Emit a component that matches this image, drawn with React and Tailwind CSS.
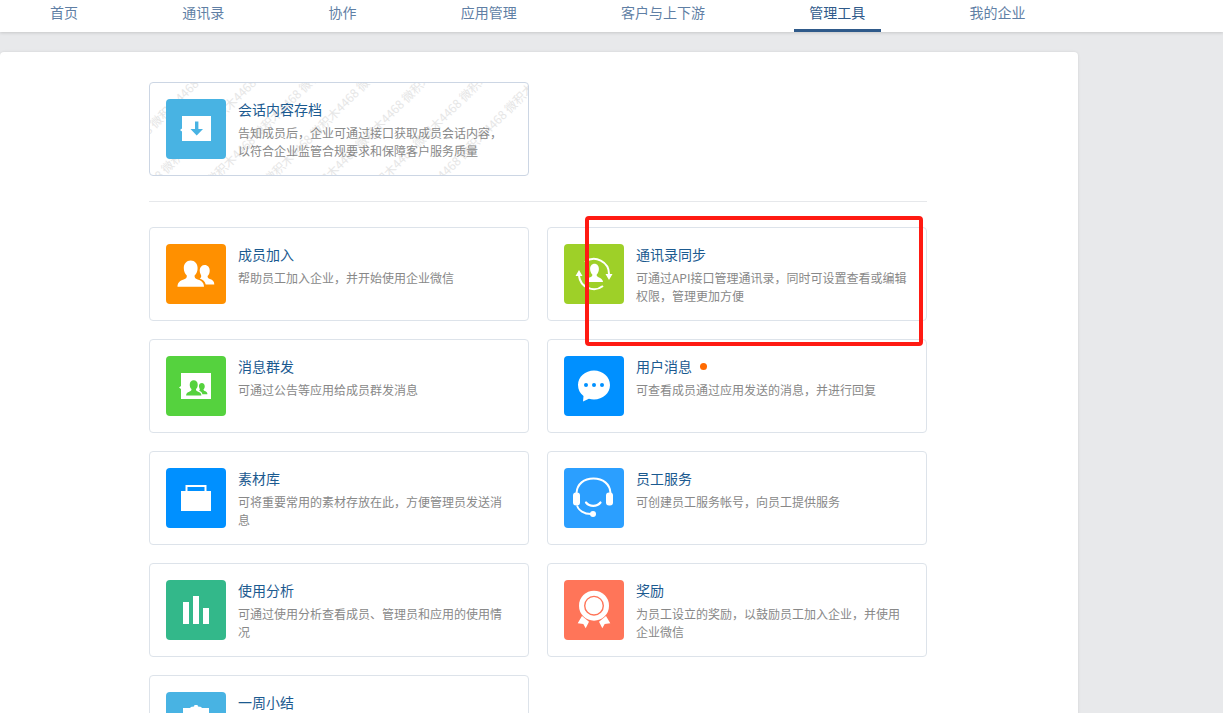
import React from 'react';

const navItems = ['首页', '通讯录', '协作', '应用管理', '客户与上下游', '管理工具', '我的企业'];

const Persons = ({ big, small }) => (
  <>
    <path fill={big} d="M11.500 42.800c0-4 2.200-6 6.200-7.300 2.600-.9 3.300-2 3.100-4-2-1.600-3-4.500-3-7.500 0-4.300 2.800-7.500 6.900-7.500s6.900 3.200 6.900 7.500c0 3-1 5.900-3 7.500-.2 2 .5 3.100 3.100 4 4 1.300 6.300 3.300 6.300 7.300z" />
    <path fill={small} d="M34.500 29.900c1.200 2 1 3.400-.8 4.700 3.200 1.100 5.500 3 6 5.900h8.600c0-2.900-1.500-4.500-4.400-5.500-1.900-.7-2.400-1.500-2.300-3 1.400-1.200 2.100-3.200 2.100-5.300 0-3.300-2-5.600-5-5.600-2.800 0-4.800 2.100-5 5 .1 1.300.1 2.600.800 3.800z" />
  </>
);

const icons = {
  archive: (
    <>
      <path fill="#fff" d="M16 17h29v25H16v-9.500L14 31l2-1.500z" />
      <path fill="#48b3e3" d="M29 22.500h3.400V30H37l-6.300 6.500L24.500 30H29z" />
    </>
  ),
  members: <Persons big="#fff" small="#fff" />,
  sync: (
    <>
      <path fill="none" stroke="#fff" strokeWidth="2" d="M21 18A15 15 0 0 1 45 30M39 42A15 15 0 0 1 15 32" />
      <path fill="#fff" d="M45 36l-3.500-6h7zM15 26l3.500 6h-7z" />
      <path fill="#fff" d="M22 38c0-3 2-4 4.800-5.100 1.200-.5 1.700-1.200 1.500-2.400-1.400-1.200-2.200-3.300-2.200-5.500 0-3.100 1.800-5.200 4.400-5.200s4.400 2.100 4.400 5.200c0 2.200-.8 4.300-2.200 5.500-.2 1.200.3 1.900 1.500 2.400C36 34 39 35 39 38z" />
    </>
  ),
  broadcast: (
    <>
      <path fill="#fff" d="M15 17h30v26H15v-10l-2-1.500 2-1.500z" />
      <g transform="translate(13.400 14.800) scale(.58)">
        <Persons big="#55d23e" small="#55d23e" />
      </g>
    </>
  ),
  message: (
    <>
      <path fill="#fff" d="M30 14.500c8.800 0 16 6.400 16 14.500s-7.200 14.500-16 14.500c-1.800 0-3.500-.3-5.100-.8L19 45.500l.5-5.500C16 37.300 14 33.400 14 29c0-8.100 7.200-14.500 16-14.500z" />
      <circle cx="22" cy="29" r="2" fill="#0090ff" />
      <circle cx="30" cy="29" r="2" fill="#0090ff" />
      <circle cx="38" cy="29" r="2" fill="#0090ff" />
    </>
  ),
  briefcase: (
    <>
      <rect x="15" y="23" width="30" height="20" fill="#fff" />
      <path fill="none" stroke="#fff" strokeWidth="2" d="M20.500 23v-5h19v5" />
    </>
  ),
  headset: (
    <>
      <path fill="none" stroke="#fff" strokeWidth="2" d="M12.500 25C13 16 20 10.500 29.500 10.500S46 16 46.500 25" />
      <rect x="9" y="24.500" width="7" height="13" rx="3" fill="#fff" />
      <rect x="42" y="24.500" width="7" height="13" rx="3" fill="#fff" />
      <path fill="none" stroke="#fff" strokeWidth="2.200" strokeLinecap="round" d="M22 34.500c3.500 4.500 11 4.500 14.500 0" />
      <path fill="none" stroke="#fff" strokeWidth="1.800" d="M13 37.500c1.500 5 7 8.500 14 8.500" />
      <circle cx="29" cy="46" r="3" fill="#fff" />
    </>
  ),
  chart: (
    <>
      <rect x="17" y="22" width="6" height="22" fill="#fff" />
      <rect x="27" y="16" width="6" height="28" fill="#fff" />
      <rect x="37" y="28" width="6" height="16" fill="#fff" />
    </>
  ),
  award: (
    <>
      <path fill="#fff" d="M13.700 43.300 18 36l7 5.700-3.300 6.600-2.400-4.300zM46.300 43.300 42 36l-7 5.700 3.300 6.600 2.400-4.300z" />
      <circle cx="30" cy="25.700" r="15" fill="#fff" />
      <circle cx="30" cy="25.700" r="9.300" fill="none" stroke="#ff7559" strokeWidth="1.400" />
    </>
  ),
  clipboard: <path fill="#fff" d="M17 16h7.500v-1l3.500-.5.500-1.500h3l.500 1.500 3.500.5v1H43v30H17z" />,
};

const tools = [
  { title: '成员加入', desc: '帮助员工加入企业，并开始使用企业微信', color: 'bg-[#ff9000]', icon: 'members' },
  { title: '通讯录同步', desc: '可通过API接口管理通讯录，同时可设置查看或编辑权限，管理更加方便', color: 'bg-[#9ed028]', icon: 'sync' },
  { title: '消息群发', desc: '可通过公告等应用给成员群发消息', color: 'bg-[#55d23e]', icon: 'broadcast' },
  { title: '用户消息', desc: '可查看成员通过应用发送的消息，并进行回复', color: 'bg-[#0090ff]', icon: 'message', dot: true },
  { title: '素材库', desc: '可将重要常用的素材存放在此，方便管理员发送消息', color: 'bg-[#0090ff]', icon: 'briefcase' },
  { title: '员工服务', desc: '可创建员工服务帐号，向员工提供服务', color: 'bg-[#2b9fff]', icon: 'headset' },
  { title: '使用分析', desc: '可通过使用分析查看成员、管理员和应用的使用情况', color: 'bg-[#33b88a]', icon: 'chart' },
  { title: '奖励', desc: '为员工设立的奖励，以鼓励员工加入企业，并使用企业微信', color: 'bg-[#ff7559]', icon: 'award' },
  { title: '一周小结', desc: '', color: 'bg-[#48b3e3]', icon: 'clipboard' },
];

// one wrapped block, rotated over the whole card
const watermarkText = Array.from({ length: 70 }, () => '微积木4468').join(' ');

const ToolCard = ({ title, desc, color, icon, dot, bordered, watermark }) => (
  <div className={`relative flex h-[94px] w-[380px] overflow-hidden rounded-[4px] border bg-white pl-4 pt-4 ${bordered || 'border-[#dde3ea]'}`}>
    {watermark && (
      <div className="absolute left-[-60px] top-[-190px] h-[470px] w-[500px] rotate-[-45deg] overflow-hidden text-xs leading-[40px] text-[#e6e6e6]">
        {watermarkText}
      </div>
    )}
    <div className={`relative h-[60px] w-[60px] shrink-0 rounded-[4px] ${color}`}>
      <svg viewBox="0 0 60 60" className="h-[60px] w-[60px]">{icons[icon]}</svg>
    </div>
    <div className="relative ml-3 w-[273px]">
      <div className="-mt-px flex h-[22px] items-center text-sm leading-[22px] text-[#1b5a90]">
        {title}
        {dot && <span className="ml-2 mt-px h-[7px] w-[7px] rounded-full bg-[#ff6a00]" />}
      </div>
      <p className="mt-1 text-xs leading-[18px] text-[#888888]">{desc}</p>
    </div>
  </div>
);

const App = () => {
  return (
    <div className="relative h-[713px] overflow-hidden bg-[#e8e9eb] font-['Noto_Sans_CJK_SC','Noto_Sans',sans-serif]">
      <nav className="relative z-10 flex h-8 gap-[73.25px] bg-white pl-[34.5px] shadow-[0_1px_3px_rgba(0,0,0,0.15)]">
        {navItems.map((item) => (
          <div
            key={item}
            className={`h-8 px-[15.5px] text-sm leading-[24px] ${
              item === '管理工具'
                ? 'border-b-[3px] border-[#2f5a8a] text-[#2f5a8a]'
                : 'text-[#5f7fa5]'
            }`}
          >
            {item}
          </div>
        ))}
      </nav>

      <main className="mt-5 h-[700px] w-[1078px] rounded-[4px] bg-white pl-[149px] pt-[30px] shadow-[0_0_3px_rgba(0,0,0,0.1)]">
        <div className="w-[778px]">
          <ToolCard
            title="会话内容存档"
            desc="告知成员后，企业可通过接口获取成员会话内容，以符合企业监管合规要求和保障客户服务质量"
            color="bg-[#48b3e3]"
            icon="archive"
            bordered="border-[#ccd6e4]"
            watermark
          />
          <div className="mb-[25px] mt-[25px] h-px bg-[#e6e8eb]" />
          <div className="grid grid-cols-[380px_380px] gap-[18px]">
            {tools.map((tool) => (
              <ToolCard key={tool.title} {...tool} />
            ))}
          </div>
        </div>
      </main>

      <div className="absolute left-[585px] top-[216px] h-[130px] w-[338px] rounded-[4px] border-4 border-[#ff1a12]" />
    </div>
  );
};

export default App;
